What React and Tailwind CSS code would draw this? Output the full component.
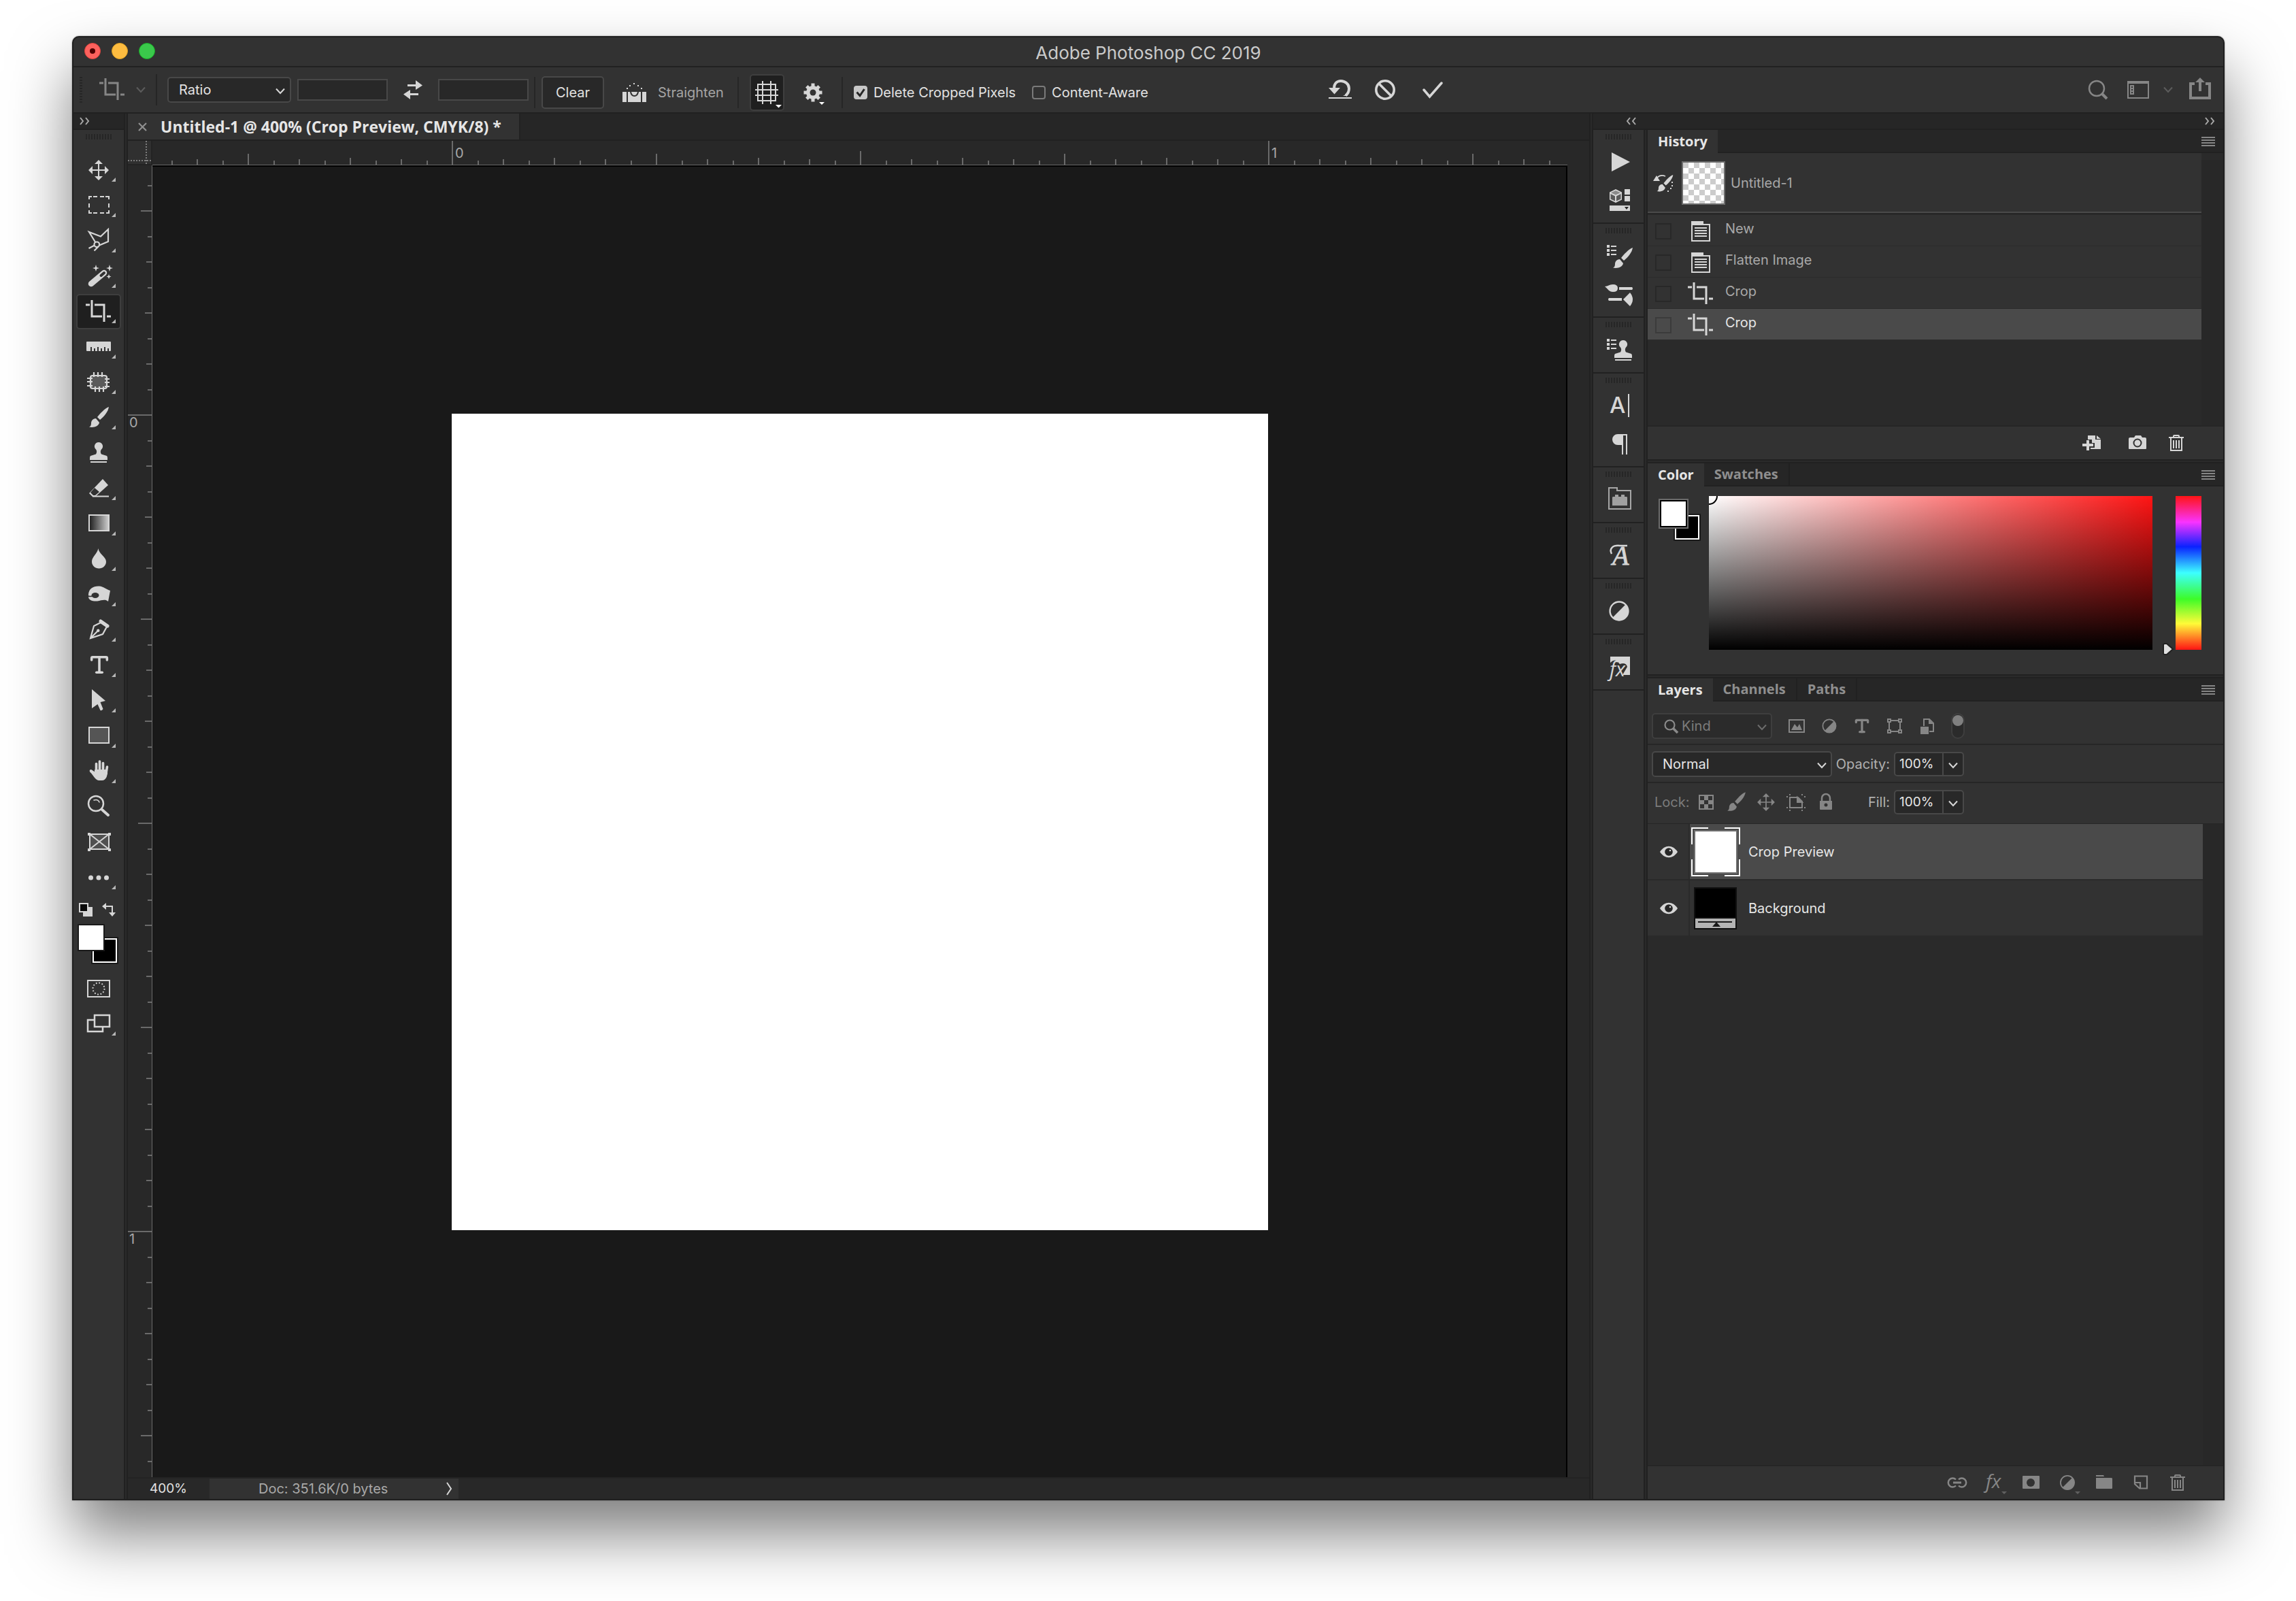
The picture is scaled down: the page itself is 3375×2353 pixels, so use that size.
import React, { useState } from 'react';
import { Type } from 'lucide-react';

const LIGHT = '#d6d6d6';
const MUTED = '#868686';

const ChevronDown = ({ className = '', color = LIGHT }) => (
    <svg className={className} width="16" height="10" viewBox="0 0 16 10" fill="none" stroke={color} strokeWidth="2">
        <path d="M2 1.5 8 8l6-6.5" />
    </svg>
)

const DoubleChevron = ({ left }) => (
    <svg width="16" height="12" viewBox="0 0 16 12" fill="none" stroke="#a8a8a8" strokeWidth="2">
        {left ? <path d="M6 1 2 6l4 5M14 1l-4 5 4 5" /> : <path d="M2 1l4 5-4 5M10 1l4 5-4 5" />}
    </svg>
)

const Gutter = () => (
    <div className="w-[6px] shrink-0 border-x-2 border-[#212121] bg-[#2a2a2a]"></div>
)

const Grip = () => (
    <div className="mx-auto mt-[6px] h-2 w-[38px] bg-[repeating-linear-gradient(90deg,#262626_0_2px,transparent_2px_4px)]"></div>
)

const Separator = ({ className = '' }) => (
    <div className={'h-[46px] w-[2px] bg-[#262626] ' + className}></div>
)

const CropShape = ({ color = LIGHT }) => (
    <g fill="none" stroke={color} strokeWidth="3">
        <path d="M-10 -17V7H5M-6 -10H8V15M-19 -10h6M12 7h6" />
    </g>
)

const BrushShape = ({ color = LIGHT }) => (
    <g fill={color}>
        <path d="M15-16C9-14 2-6-2-1l4 4C8-2 14-9 15-16z" />
        <path d="M-4 1C-9 1-11 5-11 8s-1 5-3 5.500C-8 15 0 13 1 7z" />
    </g>
)

const MoveShape = ({ color = LIGHT }) => (
    <g fill={color}>
        <path d="M-1-12h2v24h-2zM-12-1h24v2h-24z" />
        <path d="M0-15l6 6h-12zM0 15l6-6h-12zM-15 0l6-6v12zM15 0l-6-6v12z" />
    </g>
)

const StampShape = ({ color = LIGHT }) => (
    <g fill={color}>
        <path d="M0-16a6 6 0 0 1 4 10.500C2-3 3 0 4 1.500L12 4q1 1 1 3v3h-26V7q0-2 1-3l8-2.500C-3 0-2-3-4-5.500A6 6 0 0 1 0-16z" />
        <path d="M-12 12h24v2h-24z" />
    </g>
)

const AdjustShape = ({ color = LIGHT, r = 13 }) => (
    <g transform={'scale(' + r / 13 + ')'}>
        <circle r="12.500" fill="none" stroke={color} strokeWidth="2.200" />
        <path d="M9-9A12.700 12.700 0 1 1-9 9z" fill={color} />
    </g>
)

const TrashShape = ({ color = LIGHT }) => (
    <g fill="none" stroke={color} strokeWidth="2">
        <path d="M-11-8h22M-8-8v19H8V-8M-4-8v-2q0-1 1-1h6q1 0 1 1v2M-4-4V8M0-4V8M4-4V8" />
    </g>
)

const ListShape = () => (
    <g fill={LIGHT}>
        <path d="M-17-16h4v4h-4zM-17-10h4v4h-4zM-17-4h4v4h-4zM-11-15h8v2h-8zM-11-9h8v2h-8zM-11-3h8v2h-8z" />
    </g>
)

const tools = [
    {
        name: 'Move', icon: <MoveShape />
    },
    {
        name: 'Marquee', icon: <path d="M-14-9v-4h4M-8-13h6M2-13h6M10-13h5v4M15-3v6M15 7v4h-4M8 11H2M-2 11h-6M-10 11h-4V7M-14 3v-6" fill="none" stroke={LIGHT} strokeWidth="2" />
    },
    {
        name: 'Lasso',
        icon: <g fill="none" stroke={LIGHT} strokeWidth="2.200">
            <path d="M-4.500 2.500-14-13 3-6.500 14-17V1L1 6.500" />
            <circle cx="-2.700" cy="5.300" r="3.800" />
            <path d="M-6 6.500-14.500 11M-.5 8.500-6.500 14.500" />
        </g>
    },
    {
        name: 'Magic Wand',
        icon: <g>
            <path d="M-11 11 8-5" stroke={LIGHT} strokeWidth="8.500" strokeLinecap="round" />
            <path d="M3.500-1 8-5" stroke="#323232" strokeWidth="4" strokeLinecap="round" />
            <path d="M-4-17l1.200 4 3.800 1-3.800 1.200L-4-7l-1.200-3.800L-9-12l3.800-1zM16-17l1.200 4 3.800 1-3.800 1.200L16-7l-1.200-3.800L11-12l3.800-1zM15-3l1 2.500 2.500 1-2.500 1L15 4l-1-2.500-2.500-1 2.500-1z" fill={LIGHT} />
        </g>
    },
    {
        name: 'Crop', icon: <CropShape />, active: true
    },
    {
        name: 'Ruler', icon: <path d="M-18-7q0-1 1-1h34q1 0 1 1V5q0 1-1 1h-2V2h-2v4h-3V0H8v6H5V2H3v4H0V0h-2v6h-3V2h-2v4h-3V0h-2v6h-5q-1 0-1-1z" fill={LIGHT} />
    },
    {
        name: 'Patch',
        icon: <g stroke={LIGHT} strokeWidth="2.200">
            <rect x="-12" y="-10" width="24" height="19" rx="3" fill="#5a5a5a" />
            <path d="M-7-15v7M-1-15v7M5-15v7M-5 6v8M1 6v8M7 6v8M-17-6h8M-17-1h8M-17 5h8M9-5h7M9 0h7M9 6h7" />
        </g>
    },
    {
        name: 'Brush', icon: <BrushShape />
    },
    {
        name: 'Stamp', icon: <StampShape />, single: true
    },
    {
        name: 'Eraser',
        icon: <g>
            <path d="M6-14 14-5-5 12h-4l-5-5z" fill={LIGHT} />
            <path d="M-6-1 1 5l-6 5h-3l-4-4z" fill="#323232" />
            <path d="M-9 11.500h24" stroke={LIGHT} strokeWidth="2" />
        </g>
    },
    {
        name: 'Gradient',
        icon: <g>
            <linearGradient id="tool-gradient"><stop offset="0" stopColor="#1c1c1c" /><stop offset="1" stopColor="#d0d0d0" /></linearGradient>
            <rect x="-14" y="-13" width="29" height="23" fill="url(#tool-gradient)" stroke={LIGHT} strokeWidth="2" />
        </g>
    },
    {
        name: 'Blur', icon: <path d="M-.5-16C0-8 11-4 11 3.500 11 9.500 6 13.500.5 13.500S-10 9.500-10 3.500C-10-4-2-8-.5-16z" fill={LIGHT} />
    },
    {
        name: 'Dodge',
        icon: <g>
            <path d="M-15-1C-14-9-8-13 1-12.500 7-12 11-8 17-6L14 10C10 6 5 8-2 9.500-9 10-15 8-15 3z" fill={LIGHT} />
            <ellipse cx="-5" cy="1" rx="5.500" ry="4" fill="#323232" />
            <path d="M-9 2q-3 1-7 0" fill="none" stroke="#323232" strokeWidth="1.500" />
        </g>
    },
    {
        name: 'Pen',
        icon: <g fill="none" stroke={LIGHT} strokeWidth="2.200">
            <path d="M-12 12-7-6 3-11 12-5 6 6zM-12 12-1 1" />
            <circle cx="-.7" cy=".7" r="2.200" fill={LIGHT} stroke="none" />
            <path d="M3-13 13-6" strokeWidth="5" strokeLinecap="round" />
        </g>
    },
    {
        name: 'Type', icon: <Type x="-16" y="-18" width="34" height="34" color={LIGHT} strokeWidth={2.5} />
    },
    {
        name: 'Path Selection', icon: <path d="M-10-17 10 0 2.500 2 6.500 12q-2 3-4 2L-1.500 5-10 11z" fill={LIGHT} />
    },
    {
        name: 'Rectangle', icon: <rect x="-14" y="-13" width="29" height="23" fill="#555" stroke={LIGHT} strokeWidth="2" />
    },
    {
        name: 'Hand',
        icon: <g stroke={LIGHT} strokeLinecap="round" strokeWidth="3.600">
            <path d="M-3.500 0v-11.500M1.500-1v-14M6.500 0v-12.500M11 2l1.500-9" />
            <path d="M-5-2h17C13 5 10 12 5 12H0C-5 12-7 4-12 0q-1-2 1-2l6 4z" fill={LIGHT} strokeWidth="2" strokeLinejoin="round" />
        </g>
    },
    {
        name: 'Zoom', single: true,
        icon: <g fill="none" stroke={LIGHT} strokeLinecap="round">
            <circle cx="-4" cy="-5" r="11" strokeWidth="2.500" />
            <path d="M-7-10q6-2 8 3" strokeWidth="1.500" />
            <path d="M5 4l9 8" strokeWidth="4" />
        </g>
    },
    {
        name: 'Frame', single: true,
        icon: <g>
            <path d="M-13-12h28v22h-28z" fill="#505050" />
            <path d="M-13-12h28v22h-28zM-13-12 15 10M15-12-13 10" fill="none" stroke={LIGHT} strokeWidth="2" />
            <path d="M-16-14h4v4h-4zM14-14h4v4h-4zM-16 9h4v4h-4zM14 9h4v4h-4z" fill={LIGHT} />
        </g>
    },
    {
        name: 'More', icon: <g fill={LIGHT}><circle cx="-11.500" r="3.500" /><circle r="3.500" /><circle cx="11.500" r="3.500" /></g>
    },
]

const ToolButton = ({ name, icon, active, single }) => (
    <button
        type="button"
        aria-label={name}
        className={'block h-[52px] w-[66px] shrink-0 rounded-[5px] border-2 ' + (active ? 'border-[#3e3e3e] bg-[#1f1f1f]' : 'border-transparent')}
    >
        <svg width="62" height="48" viewBox="-31 -24 62 48">
            {icon}
            {!single && <path d="M19 17h6v-6z" fill="#b8b8b8" />}
        </svg>
    </button>
)

const Toolbar = () => (
    <div className="flex w-[74px] shrink-0 flex-col bg-[#323232]">
        <div className="h-6 border-b-2 border-[#212121] bg-[#262626] px-2 pt-[5px]"><DoubleChevron /></div>
        <Grip />
        <div className="mt-[19px] flex flex-col items-center">
            {tools.map((tool) => <ToolButton key={tool.name} {...tool} />)}
        </div>
        <div className="flex h-[42px] items-center justify-between pr-3 pl-2">
            <button type="button" aria-label="Default colors">
                <svg width="20" height="20" viewBox="0 0 20 20">
                    <path d="M6 6h14v14H6z" fill={LIGHT} />
                    <path d="M1 1h12v12H1z" fill="#0a0a0a" stroke={LIGHT} strokeWidth="2" />
                </svg>
            </button>
            <button type="button" aria-label="Swap colors">
                <svg width="20" height="20" viewBox="0 0 20 20">
                    <path d="M5 5h10v9" fill="none" stroke={LIGHT} strokeWidth="2" />
                    <path d="M0 5l6-5v10zM10 14h10l-5 6z" fill={LIGHT} />
                </svg>
            </button>
        </div>
        <div className="relative mb-[10px] h-[59px] shrink-0">
            <div className="absolute top-[19px] left-[26px] h-10 w-10 border-2 border-[#1a1a1a] bg-white p-[2px]"><div className="h-full bg-black"></div></div>
            <div className="absolute top-0 left-[6px] h-10 w-10 border-2 border-[#1a1a1a] bg-white"></div>
        </div>
        <div className="flex flex-col items-center">
            <ToolButton
                name="Quick Mask"
                single
                icon={<g fill="none" stroke={LIGHT} strokeWidth="2"><path d="M-16-12h32v24h-32z" /><circle r="8.500" strokeDasharray="1.800 2.650" /></g>}
            />
            <ToolButton
                name="Screen Mode"
                icon={<g fill="none" stroke={LIGHT} strokeWidth="2.500"><path d="M-6-6h-10v17H6V5" /><path d="M-6-13h22V4h-22z" /></g>}
            />
        </div>
    </div>
)

const OptionsBar = () => {
    const [ratio, setRatio] = useState('Ratio');
    const [deletePixels, setDeletePixels] = useState(true);
    const [aware, setAware] = useState(false);

    return (
        <div className="flex h-[68px] shrink-0 border-b-2 border-[#212121] bg-[#323232] text-[20px] text-[#e2e2e2]">
            <div className="flex items-center">
                <div className="ml-[9px] h-[38px] w-1 bg-[repeating-linear-gradient(#262626_0_2px,transparent_2px_4px)]"></div>
                <svg className="ml-6" width="40" height="36" viewBox="-20 -18 40 36"><CropShape color={MUTED} /></svg>
                <ChevronDown className="ml-[14px]" color="#5c5c5c" />
                <Separator className="ml-[14px]" />
                <div className="relative ml-[15px]">
                    <select
                        aria-label="Crop preset"
                        value={ratio}
                        onChange={(e) => setRatio(e.target.value)}
                        className="block h-[38px] w-[182px] appearance-none rounded-[5px] border-2 border-[#484848] bg-[#282828] pl-[15px]"
                    >
                        <option>Ratio</option>
                    </select>
                    <ChevronDown className="pointer-events-none absolute top-4 right-2" />
                </div>
                <input aria-label="Width" className="ml-[9px] h-8 w-[133px] border-2 border-[#484848] bg-[#282828] px-2" />
                <button type="button" aria-label="Swap" className="mx-[23px]">
                    <svg width="28" height="28" viewBox="0 0 28 28" fill={LIGHT}>
                        <path d="M6 6h12V0l10 7.500L18 14V9H6zM22 19H10v-5L0 20.500 10 28v-6h12z" />
                    </svg>
                </button>
                <input aria-label="Height" className="h-8 w-[133px] border-2 border-[#484848] bg-[#282828] px-2" />
            </div>
            <div className="flex items-center pt-2">
                <Separator className="ml-2" />
                <button type="button" className="ml-[9px] h-12 w-[92px] rounded-[5px] border-2 border-[#484848] bg-[#282828]">Clear</button>
                <button type="button" className="ml-[27px] flex items-center gap-[17px] text-[#a4a4a4]">
                    <svg width="35" height="28" viewBox="0 0 35 28" fill={LIGHT}>
                        <path d="M0 13h6v15H0zM8 13h3q1 7 6.500 7T24 13h3v15H8zM29 13h6v15h-6zM13 13h9q-1 5-4.500 5T13 13z" />
                        <path d="M6 7h2v2H6zM10 3h2v2h-2zM16 0h2v2h-2zM22 3h2v2h-2zM27 7h2v2h-2z" />
                    </svg>
                    Straighten
                </button>
                <Separator className="ml-5" />
                <button type="button" aria-label="Overlay" className="ml-4 h-[54px] w-[51px] rounded-[5px] border-2 border-[#3e3e3e] bg-[#1f1f1f]">
                    <svg width="47" height="50" viewBox="0 0 47 50">
                        <path d="M17 8v34M29 8v34M6 21h34M6 29h34M10 13h26v24H10z" fill="none" stroke={LIGHT} strokeWidth="2" />
                        <path d="M36 43h9l-4.500 4.500z" fill="#fff" />
                    </svg>
                </button>
                <button type="button" aria-label="Settings" className="ml-7">
                    <svg width="32" height="36" viewBox="-14 -18 32 36">
                        <path d="M-2.500-13.500h5V13.500h-5zM-13.500-2.500h27v5h-27z" fill={LIGHT} />
                        <path d="M-2.500-13h5v26h-5zM-13-2.500h26v5h-26z" fill={LIGHT} transform="rotate(45)" />
                        <circle r="7.500" fill="none" stroke={LIGHT} strokeWidth="5" />
                        <circle r="4.500" fill="#323232" />
                        <path d="M9 14h8l-4 4z" fill="#fff" />
                    </svg>
                </button>
                <Separator className="ml-6" />
                <label className="ml-4 flex items-center gap-[9px]">
                    <span className="relative">
                        <input type="checkbox" checked={deletePixels} onChange={(e) => setDeletePixels(e.target.checked)} className="peer block h-5 w-5 appearance-none rounded-[4px] border-2 border-[#7a7a7a] checked:border-[#c8c8c8] checked:bg-[#c8c8c8]" />
                        <svg className="pointer-events-none absolute top-0 left-0 hidden peer-checked:block" width="20" height="20" viewBox="0 0 20 20"><path d="M4.500 9.500 9 14.500 15.500 5" fill="none" stroke="#262626" strokeWidth="3" /></svg>
                    </span>
                    Delete Cropped Pixels
                </label>
                <label className="ml-6 flex items-center gap-[9px]">
                    <input type="checkbox" checked={aware} onChange={(e) => setAware(e.target.checked)} className="block h-5 w-5 appearance-none rounded-[4px] border-2 border-[#7a7a7a] checked:bg-[#c8c8c8]" />
                    Content-Aware
                </label>
            </div>
            <div className="ml-[265px] flex items-center gap-[34px]">
                <button type="button" aria-label="Reset">
                    <svg width="34" height="30" viewBox="0 0 34 30">
                        <path d="M8 13C8 6 12 2 18 2s12 4.500 12 11c0 4-2 8-5 10.500" fill="none" stroke={LIGHT} strokeWidth="4" />
                        <path d="M0 12h17l-8.500 9.500zM0 26h34v2H0zM21 24l6-3 1 3z" fill={LIGHT} />
                    </svg>
                </button>
                <button type="button" aria-label="Cancel">
                    <svg width="30" height="30" viewBox="-15 -15 30 30" fill="none" stroke={LIGHT} strokeWidth="3.600">
                        <circle r="13.200" /><path d="M-9-9 9 9" />
                    </svg>
                </button>
                <button type="button" aria-label="Commit" className="ml-[6px]">
                    <svg width="30" height="26" viewBox="0 0 30 26" fill="none" stroke={LIGHT} strokeWidth="3.500" strokeLinecap="round">
                        <path d="M2 13l8.500 10L28 3" />
                    </svg>
                </button>
            </div>
            <div className="mr-[18px] ml-auto flex items-center">
                <button type="button" aria-label="Search">
                    <svg width="30" height="30" viewBox="0 0 30 30" fill="none" stroke={MUTED} strokeWidth="3">
                        <circle cx="13" cy="13" r="11" strokeWidth="2.500" /><path d="M20 20l8 8" strokeWidth="4" />
                    </svg>
                </button>
                <button type="button" aria-label="Workspace" className="ml-7">
                    <svg width="32" height="26" viewBox="0 0 32 26">
                        <path d="M0 0h32v26H0zM2 4v20h28V4z" fill={MUTED} fillRule="evenodd" />
                        <path d="M4 6h6v14H4zM6 8v2h2V8zM6 12v2h2v-2zM6 16v2h2v-2z" fill={MUTED} fillRule="evenodd" />
                    </svg>
                </button>
                <ChevronDown className="ml-5" color="#5c5c5c" />
                <button type="button" aria-label="Share" className="ml-[23px] -mt-1">
                    <svg width="32" height="32" viewBox="0 0 32 32">
                        <path d="M8 9H2v21h28V9h-6" fill="none" stroke={MUTED} strokeWidth="4" />
                        <path d="M16 0l7 7h-5v13h-4V7H9z" fill={MUTED} />
                    </svg>
                </button>
            </div>
        </div>
    );
}

// the zero mark lies 600px before the centre of the ruler, one unit is 1200px
const ticks = Array.from({ length: 81 }, (_, n) => n - 24).map((n) => {
    let size = 6;
    if (n % 32 === 0) size = 35;
    else if (n % 16 === 0) size = 20;
    else if (n % 8 === 0) size = 16;
    else if (n % 4 === 0) size = 10;
    else if (n % 2 === 0) size = 8;
    return { n, size, at: Math.round(n * 37.5) - 600 };
})

const RulerTop = () => (
    <svg className="block h-[35px] w-full" aria-hidden="true">
        <svg x="50%" overflow="visible">
            {ticks.map((t) => <rect key={t.n} x={t.at} y={35 - t.size} width="2" height={t.size} fill="#6a6a6a" />)}
            <text x="-595" y="25" fontSize="20" fill="#a8a8a8">0</text>
            <text x="605" y="25" fontSize="20" fill="#a8a8a8">1</text>
        </svg>
    </svg>
)

const RulerLeft = () => (
    <svg className="block h-full w-[35px]" aria-hidden="true">
        <svg y="50%" overflow="visible">
            {ticks.map((t) => <rect key={t.n} x={35 - t.size} y={t.at + 2} width={t.size} height="2" fill="#6a6a6a" />)}
            <text x="2" y="-579" fontSize="20" fill="#a8a8a8">0</text>
            <text x="2" y="621" fontSize="20" fill="#a8a8a8">1</text>
        </svg>
    </svg>
)

const DocumentArea = () => (
    <div className="flex min-w-0 flex-1 flex-col bg-[#282828]">
        <div className="flex h-10 shrink-0 border-b-2 border-[#212121] bg-[#262626]">
            <div className="flex items-center border-r-2 border-[#222] bg-[#323232] pr-[26px] pl-[15px] font-['Open_Sans',sans-serif] text-[23px] leading-none font-bold text-[#e6e6e6]">
                <button type="button" aria-label="Close" className="mr-5">
                    <svg width="13" height="13" viewBox="0 0 13 13" stroke="#909090" strokeWidth="2.200"><path d="M1 1l11 11M12 1 1 12" /></svg>
                </button>
                Untitled-1 @ 400% (Crop Preview, CMYK/8) *
            </div>
        </div>
        <div className="flex min-h-0 flex-1">
            <div className="flex w-9 shrink-0 flex-col">
                <div className="h-9 shrink-0 border-r-2 border-b-2 border-[#232323] bg-[#303030]">
                    <svg width="34" height="34" viewBox="0 0 34 34" stroke="#7c7c7c" strokeWidth="2" strokeDasharray="2 2">
                        <path d="M27 0v34M0 29h34" />
                    </svg>
                </div>
                <div className="min-h-0 flex-1 border-r border-[#6a6a6a]"><RulerLeft /></div>
            </div>
            <div className="flex min-w-0 flex-1 flex-col">
                <div className="h-9 shrink-0 border-b border-[#6a6a6a]"><RulerTop /></div>
                <div className="flex min-h-0 flex-1 items-center justify-center overflow-hidden bg-[#191919] pt-[2px] shadow-[inset_-2px_2px_0_#000]">
                    <div className="h-[1200px] w-[1200px] shrink-0 bg-white"></div>
                </div>
            </div>
            <div className="w-8 shrink-0"></div>
        </div>
        <div className="flex h-8 shrink-0 items-center border-t-2 border-[#232323] text-[20px]">
            <div className="w-[120px] pl-8 text-[19px] text-[#e2e2e2]">400%</div>
            <button type="button" className="flex h-full w-[366px] items-center justify-between bg-[#323232] pr-[9px] pl-[72px] text-[#a8a8a8]">
                Doc: 351.6K/0 bytes
                <svg width="9" height="20" viewBox="0 0 9 20" fill="none" stroke="#d6d6d6" strokeWidth="2"><path d="M1 1l6 9-6 9" /></svg>
            </button>
        </div>
    </div>
)

const dockGroups = [
    [
        {
            name: 'Actions', icon: <path d="M-10-14 17 0-10 14z" fill={LIGHT} />
        },
        {
            name: 'Libraries',
            icon: <g>
                <path d="M-4-16 5-11.500v11L-4 4l-9-4.500v-11z" fill={LIGHT} />
                <path d="M-4-14 3-10.800-4-7.500-11-10.800z" fill="#8a8a8a" />
                <path d="M-11.500-9-5-5.800v7.200l-6.500-3zM3.500-9-3-5.800v7.200l6.500-3z" fill="#5a5a5a" />
                <path d="M9-16h8v8H9zM9-6h8v8H9zM-13 8h30v8h-30z" fill={LIGHT} />
                <path d="M9 10h6l-3 4z" fill="#262626" />
            </g>
        },
    ],
    [
        {
            name: 'Brushes', icon: <g><ListShape /><g transform="translate(6 4)"><BrushShape /></g></g>
        },
        {
            name: 'Brush Settings',
            icon: <g fill={LIGHT}>
                <path d="M-20-11C-15-11-14-14-8-14q7 0 7 5.500T-8-3C-14-3-16-8-20-11zM1-10h19q2 2 0 4H1zM5 6v4h-19q-2-2 0-4zM7 8 17-2q4 5 4 10t-4 10z" />
            </g>
        },
    ],
    [
        {
            name: 'Clone Source', icon: <g><ListShape /><g transform="translate(7 2)"><StampShape /></g></g>
        },
    ],
    [
        {
            name: 'Character',
            icon: <g fill={LIGHT}>
                <text x="-13" y="11" fontSize="33" fontWeight="500">A</text>
                <path d="M14-17h2v34h-2z" />
            </g>
        },
        {
            name: 'Paragraph', icon: <path d="M13-14v30h-2v-28H7v28H5V2H-1a8 8 0 0 1 0-16z" fill={LIGHT} />
        },
    ],
    [
        {
            name: 'Learn',
            icon: <g>
                <path d="M-14-17H-2v4h20v27h-32z" fill="none" stroke="#a6a6a6" strokeWidth="2" />
                <path d="M-9-3q0-1 2-1h2v-3h5v3h4v-3h5v3h2q2 0 2 1v12H-9z" fill="#a0a0a0" />
            </g>
        },
    ],
    [
        {
            name: 'Glyphs',
            icon: <g fill={LIGHT}>
                <text x="-9" y="14" fontSize="40" fontStyle="italic" fontFamily="'Liberation Serif', serif" stroke={LIGHT} strokeWidth=".8">A</text>
                <path d="M-10-2C-14-10-8-15 2-14h11" fill="none" stroke={LIGHT} strokeWidth="2.500" />
            </g>
        },
    ],
    [
        {
            name: 'Adjustments', icon: <g transform="translate(1 0)"><AdjustShape r={14} /></g>
        },
    ],
    [
        {
            name: 'Styles',
            icon: <g>
                <path d="M-12-15h29v27H-12z" fill={LIGHT} />
                <path d="M-12-6q7-8 14 2 9-3 11 4L6 12h-18z" fill="#323232" />
                <text x="-13" y="14" fontSize="29" fontStyle="italic" fontFamily="'Open Sans', sans-serif" fill={LIGHT}>fx</text>
            </g>
        },
    ],
]

const Dock = () => (
    <div className="flex w-[74px] shrink-0 flex-col bg-[#323232]">
        {dockGroups.map((group, index) => (
            <div key={index} className="flex flex-col items-center border-b-2 border-[#212121] pb-[5px]">
                <Grip />
                <div className="mt-[5px]">
                    {group.map((item) => (
                        <button key={item.name} type="button" aria-label={item.name} className="block">
                            <svg className="overflow-visible" width="56" height="56" viewBox="-28 -28 56 56">{item.icon}</svg>
                        </button>
                    ))}
                </div>
            </div>
        ))}
    </div>
)

const PanelTabs = ({ tabs }) => (
    <div className="flex h-[34px] shrink-0 bg-[#262626] font-['Open_Sans',sans-serif] text-[20px] leading-none font-bold">
        {tabs.map((tab, index) => (
            <button
                key={tab}
                type="button"
                className={'h-full ' + (index === 0 ? 'bg-[#323232] px-[15px] text-[#e6e6e6]' : 'border-r-2 border-b-2 border-[#212121] px-[15px] text-[#8f8f8f]')}
            >
                {tab}
            </button>
        ))}
        <div className="flex-1 border-b-2 border-[#212121]"></div>
        <button type="button" aria-label="Panel menu" className="border-b-2 border-[#212121] pr-3">
            <div className="mt-[2px] h-[14px] w-5 bg-[repeating-linear-gradient(#868686_0_2px,transparent_2px_4px)]"></div>
        </button>
    </div>
)

const PanelGap = () => (
    <div className="h-[6px] shrink-0 border-y-2 border-[#212121] bg-[#2a2a2a]"></div>
)

const PageIcon = () => (
    <g>
        <path d="M-14-15h18v5h-18z" fill={LIGHT} />
        <path d="M-13-10h26v24h-26zM-9-5H9M-9-1H9M-9 3H9M-9 7H9" fill="none" stroke={LIGHT} strokeWidth="2" />
    </g>
)

const historyRows = [
    {
        name: 'New', icon: <PageIcon />
    },
    {
        name: 'Flatten Image', icon: <PageIcon />
    },
    {
        name: 'Crop', icon: <CropShape />
    },
    {
        name: 'Crop', icon: <CropShape />, active: true
    },
]

const HistoryPanel = () => (
    <div className="flex h-[484px] shrink-0 flex-col bg-[#323232]">
        <PanelTabs tabs={['History']} />
        <div className="flex min-h-0 flex-1 bg-[#2a2a2a]">
            <div className="flex-1">
                <div className="flex h-[90px] items-center border-b-2 border-[#262626] bg-[#323232] shadow-[inset_0_-2px_0_#4a4a4a]">
                    <svg className="ml-2" width="30" height="30" viewBox="0 0 30 30">
                        <g transform="translate(17 16) scale(.82)"><BrushShape /></g>
                        <path d="M0 12 5 4l5 8z" fill={LIGHT} />
                        <path d="M6 7q5-5 12-2" fill="none" stroke={LIGHT} strokeWidth="1.500" />
                        <path d="M27 13h2v2h-2zM27 18h2v2h-2zM25 22h2v2h-2zM21 26h2v2h-2z" fill={LIGHT} />
                    </svg>
                    <div className="ml-3 h-16 w-16 border-2 border-[#6c6c6c] bg-[conic-gradient(#fff_25%,#ccc_0_50%,#fff_0_75%,#ccc_0)] bg-[length:16px_16px]"></div>
                    <span className="ml-2 text-[20px] text-[#a8a8a8]">Untitled-1</span>
                </div>
                <ul className="border-t border-[#2b2b2b]">
                    {historyRows.map((row, index) => (
                        <li key={index} className={'flex h-[46px] items-center border-b border-[#2b2b2b] text-[20px] ' + (row.active ? 'bg-[#4a4a4a] text-[#e6e6e6]' : 'bg-[#323232] text-[#a8a8a8]')}>
                            <input type="checkbox" aria-label={'Source ' + (index + 1)} className="mt-[2px] ml-[11px] h-6 w-6 appearance-none border-2 border-black/20" />
                            <svg className="mt-[2px] ml-[23px]" width="40" height="36" viewBox="-20 -18 40 36">{row.icon}</svg>
                            <span className="ml-4 pb-[6px]">{row.name}</span>
                        </li>
                    ))}
                </ul>
            </div>
            <div className="mt-[10px] w-8 bg-[#282828]"></div>
        </div>
        <div className="flex h-[50px] shrink-0 items-center justify-end border-t-2 border-[#262626] pr-[57px]">
            <button type="button" aria-label="New document from state" className="mr-10">
                <svg width="28" height="24" viewBox="0 0 28 24" fill={LIGHT}>
                    <path d="M8 1h11v6h8v14H12v-2h6v-7h-4V7H8zM21 1l6 5h-6zM6 8h4v5h6v4h-6v6H6v-6H0v-4h6z" />
                </svg>
            </button>
            <button type="button" aria-label="New snapshot" className="mr-8">
                <svg width="26" height="22" viewBox="0 0 26 22">
                    <path d="M2 3h6l2-3h8l2 3h4q2 0 2 2v14q0 1-1 1H1q-1 0-1-1V5q0-2 2-2z" fill={LIGHT} />
                    <circle cx="13" cy="11" r="5.500" fill="none" stroke="#323232" strokeWidth="2" />
                </svg>
            </button>
            <button type="button" aria-label="Delete state">
                <svg width="24" height="26" viewBox="-12 -13 24 26"><TrashShape /></svg>
            </button>
        </div>
    </div>
)

const ColorPanel = () => {
    const [hue, setHue] = useState(0);

    return (
        <div className="flex shrink-0 flex-col bg-[#323232]">
            <PanelTabs tabs={['Color', 'Swatches']} />
            <div className="flex h-[276px] px-4 pt-[14px] pr-8">
                <div className="relative w-[74px] shrink-0">
                    <div className="absolute top-[26px] left-[22px] h-10 w-10 border-2 border-[#1a1a1a] bg-white p-[2px]"><div className="h-full bg-black"></div></div>
                    <div className="absolute top-1 left-0 h-11 w-11 border-2 border-[#6c6c6c] bg-black p-[2px]"><div className="h-full bg-white"></div></div>
                </div>
                <div className="h-[226px] flex-1 overflow-hidden bg-[linear-gradient(transparent,#000),linear-gradient(90deg,#fff,#ff1414)]">
                    <svg width="16" height="16"><circle r="12" fill="none" stroke="#000" strokeWidth="2" /></svg>
                </div>
                <div className="relative ml-[34px] h-[226px] w-[38px] bg-[linear-gradient(#ff1414,#f933ff_17%,#0a22ff_33%,#3dffff_50%,#3dfc28_67%,#fffb38_83%,#ff1414)]">
                    <input type="range" aria-label="Hue" min="0" max="360" value={hue} onChange={(e) => setHue(e.target.value)} className="absolute inset-0 h-full w-full opacity-0" />
                    <svg className="absolute -bottom-[9px] -left-5" width="18" height="20" viewBox="0 0 18 20"><path d="M2 4q0-2 2-2h3l9 8-9 8H4q-2 0-2-2z" fill="#e0e0e0" stroke="#222" strokeWidth="2" /></svg>
                </div>
            </div>
        </div>
    );
}

const filterIcons = [
    {
        name: 'Filter pixel layers',
        icon: <g><path d="M-11-9h22V9h-22z" fill="none" stroke={MUTED} strokeWidth="2" /><path d="M-8 6l5-9 4 5 3-5 4 9z" fill={MUTED} /></g>
    },
    {
        name: 'Filter adjustment layers', icon: <AdjustShape color={MUTED} r={10} />
    },
    {
        name: 'Filter type layers', icon: <Type x="-13" y="-13" width="26" height="26" color={MUTED} strokeWidth={3} />
    },
    {
        name: 'Filter shape layers',
        icon: <g fill="none" stroke={MUTED} strokeWidth="2"><path d="M-5-8H5M-5 8H5M-8-5V5M8-5V5" /><path d="M-10-10h4v4h-4zM6-10h4v4H6zM-10 6h4v4h-4zM6 6h4v4H6z" /></g>
    },
    {
        name: 'Filter smart objects',
        icon: <g><path d="M-5 0v-10H3l6 6V8H3" fill="none" stroke={MUTED} strokeWidth="2" /><path d="M2-10v7h7zM-10 1H2v11h-12z" fill={MUTED} /></g>
    },
]

const lockIcons = [
    {
        name: 'Lock transparency', icon: <path d="M-11-11h22v22h-22zM-9-9v6h6v-6zM3-9v6h6v-6zM-3-3v6h6v-6zM-9 3v6h6V3zM3 3v6h6V3z" fill={MUTED} fillRule="evenodd" />
    },
    {
        name: 'Lock pixels', icon: <g transform="scale(.92)"><BrushShape color={MUTED} /></g>
    },
    {
        name: 'Lock position', icon: <g transform="scale(.86)"><MoveShape color={MUTED} /></g>
    },
    {
        name: 'Lock artboard',
        icon: <g fill="none" stroke={MUTED} strokeWidth="2"><path d="M-9-7H3l6 6v9H-9z" /><path d="M2-7v7h7z" fill={MUTED} /><path d="M-14-8h2M-14 8h2M12-8h2M12 8h2M-9-12v2M9-12v2M-9 11v2M9 11v2" /></g>
    },
    {
        name: 'Lock all',
        icon: <g><path d="M-9-2h18v12q0 1-1 1H-8q-1 0-1-1z" fill={MUTED} /><path d="M-6-2v-4a6 6 0 0 1 12 0v4" fill="none" stroke={MUTED} strokeWidth="2.500" /><circle cy="4" r="2.500" fill="#323232" /></g>
    },
]

const Percent = ({ id, label, className }) => {
    const [value, setValue] = useState('100%');

    return (
        <>
            <label htmlFor={id} className={'pr-[6px] text-right text-[#b0b0b0] ' + className}>{label}</label>
            <div className="flex h-9 rounded-[5px] border-2 border-[#484848] bg-[#282828]">
                <input id={id} value={value} onChange={(e) => setValue(e.target.value)} className="w-[71px] border-r-2 border-[#484848] pl-[6px] text-[19px] text-[#e6e6e6]" />
                <button type="button" aria-label={label + ' slider'} className="flex w-7 items-center justify-center pt-1"><ChevronDown /></button>
            </div>
        </>
    );
}

const Eye = () => (
    <svg width="26" height="18" viewBox="-13 -9 26 18">
        <path d="M-13 0C-6-11 6-11 13 0 6 11-6 11-13 0z" fill={LIGHT} />
        <circle r="5.800" fill="#262626" />
        <circle cx="2" cy="-2" r="1.300" fill={LIGHT} />
    </svg>
)

const layers = [
    {
        name: 'Crop Preview', active: true,
        thumb: <svg width="76" height="74" viewBox="-38 -37 76 74">
            <path d="M-32-32h64v64h-64z" fill="#6e6e6e" />
            <path d="M-30-30h60v60h-60z" fill="#fff" />
            <path d="M-35-11v-24h24M13-35h22v24M35 11v24H13M-11 35h-24V11" fill="none" stroke="#fff" strokeWidth="2" />
        </svg>
    },
    {
        name: 'Background',
        thumb: <svg width="76" height="74" viewBox="-38 -37 76 74">
            <path d="M-32-31h63v62h-63z" fill="#101010" />
            <path d="M-30-29h59v42h-59z" fill="#000" />
            <path d="M-30 15h59v14h-59z" fill="#b4b4b4" />
            <path d="M-26 19h50v2h-50zM-5 27 1 20l6 7z" fill="#1a1a1a" />
        </svg>
    },
]

const footerIcons = [
    {
        name: 'Link layers',
        icon: <g fill="none" stroke={MUTED} strokeWidth="2.500"><path d="M-2-4.500A6.500 6.500 0 1 0-2 4.500M2-4.500A6.500 6.500 0 1 1 2 4.500" /><path d="M-6 0H6" strokeWidth="3" /></g>
    },
    {
        name: 'Layer style',
        icon: <g fill={MUTED}><text x="-12" y="8" fontSize="28" fontStyle="italic" fontFamily="'Open Sans', sans-serif">fx</text><path d="M11 13h8l-4 4z" fill="#606060" /></g>
    },
    {
        name: 'Layer mask', icon: <g><rect x="-12" y="-10" width="25" height="19" rx="1" fill={MUTED} /><circle r="6" fill="#323232" /></g>
    },
    {
        name: 'New adjustment layer', icon: <g><AdjustShape color={MUTED} r={10.5} /><path d="M11 13h8l-4 4z" fill="#606060" /></g>
    },
    {
        name: 'New group', icon: <path d="M-12-11h11l1 2h-12zM-12-7h22q2 0 2 1V8q0 1-1 1h-22q-1 0-1-1z" fill={MUTED} />
    },
    {
        name: 'New layer', icon: <g fill="none" stroke={MUTED} strokeWidth="2.200"><path d="M-9-9.500H9v18H-2L-9 2z" /><path d="M-9 0h8v8" /></g>
    },
    {
        name: 'Delete layer', icon: <TrashShape color={MUTED} />
    },
]

const LayersPanel = () => {
    const [kind, setKind] = useState('Kind');
    const [blend, setBlend] = useState('Normal');

    return (
        <div className="flex min-h-0 flex-1 flex-col bg-[#323232] text-[20px]">
            <PanelTabs tabs={['Layers', 'Channels', 'Paths']} />
            <div className="flex h-16 shrink-0 items-center border-b-2 border-[#262626] pt-[10px] pl-[6px]">
                <div className="relative">
                    <select
                        aria-label="Filter kind"
                        value={kind}
                        onChange={(e) => setKind(e.target.value)}
                        className="block h-[38px] w-[177px] appearance-none rounded-[5px] border-2 border-[#3e3e3e] bg-[#2b2b2b] pl-[42px] text-[#7c7c7c]"
                    >
                        <option>Kind</option>
                    </select>
                    <svg className="pointer-events-none absolute top-[9px] left-[18px]" width="22" height="22" viewBox="0 0 22 22" fill="none" stroke="#8a8a8a"><circle cx="8.500" cy="8.500" r="7" strokeWidth="2.200" /><path d="M13 13l7 7" strokeWidth="3.500" /></svg>
                    <ChevronDown className="pointer-events-none absolute top-4 right-[7px]" color="#6c6c6c" />
                </div>
                <div className="ml-3 flex">
                    {filterIcons.map((item) => (
                        <button key={item.name} type="button" aria-label={item.name} className="flex w-12 justify-center">
                            <svg width="30" height="30" viewBox="-15 -15 30 30">{item.icon}</svg>
                        </button>
                    ))}
                </div>
                <button type="button" aria-label="Toggle filter" className="ml-[11px] h-[38px] w-5 rounded-full border-2 border-[#3e3e3e] bg-[#2b2b2b]">
                    <div className="mb-[17px] h-4 w-4 rounded-full bg-[#808080]"></div>
                </button>
            </div>
            <div className="flex h-14 shrink-0 items-center border-b-2 border-[#262626] pt-[2px] pl-[6px]">
                <div className="relative">
                    <select
                        aria-label="Blend mode"
                        value={blend}
                        onChange={(e) => setBlend(e.target.value)}
                        className="block h-[38px] w-[265px] appearance-none rounded-[5px] border-2 border-[#484848] bg-[#282828] pl-[14px] text-[#e6e6e6]"
                    >
                        <option>Normal</option>
                    </select>
                    <ChevronDown className="pointer-events-none absolute top-4 right-[7px]" />
                </div>
                <Percent id="opacity" label="Opacity:" className="w-[91px]" />
            </div>
            <div className="flex h-[60px] shrink-0 items-center border-b border-[#262626] pb-[3px] pl-[10px]">
                <span className="w-[54px] text-[#7c7c7c]">Lock:</span>
                {lockIcons.map((item) => (
                    <button key={item.name} type="button" aria-label={item.name} className="flex w-11 justify-center">
                        <svg width="32" height="32" viewBox="-16 -16 32 32">{item.icon}</svg>
                    </button>
                ))}
                <Percent id="fill" label="Fill:" className="w-[78px]" />
            </div>
            <div className="flex min-h-0 flex-1 bg-[#2a2a2a]">
                <ul className="flex-1">
                    {layers.map((layer) => (
                        <li key={layer.name} className="flex h-[83px] border-b-2 border-[#2a2a2a] bg-[#323232] text-[#e6e6e6]">
                            <button type="button" aria-label={'Toggle ' + layer.name} className="flex w-[62px] items-center justify-center border-r-2 border-[#2a2a2a] pl-[2px]"><Eye /></button>
                            <div className={'flex flex-1 items-center ' + (layer.active ? 'bg-[#4a4a4a]' : '')}>
                                {layer.thumb}
                                <span className="ml-[10px]">{layer.name}</span>
                            </div>
                        </li>
                    ))}
                </ul>
                <div className="w-[30px] bg-[#282828]"></div>
            </div>
            <div className="flex h-[50px] shrink-0 items-center justify-end border-t-2 border-[#262626] pr-10">
                {footerIcons.map((item) => (
                    <button key={item.name} type="button" aria-label={item.name} className="flex w-[54px] justify-center">
                        <svg className="overflow-visible" width="40" height="46" viewBox="-20 -23 40 46">{item.icon}</svg>
                    </button>
                ))}
            </div>
        </div>
    );
}

const App = () => {
    return (
        <div className="flex h-screen bg-white pt-[53px] pr-[105px] pb-[148px] pl-[106px] font-['Inter',sans-serif]">
            <div className="flex min-w-0 flex-1 flex-col overflow-hidden rounded-t-[10px] border-2 border-[#1f1f1f] bg-[#323232] shadow-[0_0_2px_rgba(0,0,0,0.5),0_50px_90px_rgba(0,0,0,0.5)]">
                <div className="grid h-11 shrink-0 grid-cols-[1fr_auto_1fr] items-center border-b-2 border-[#212121]">
                    <div className="flex gap-4 pb-[2px] pl-4">
                        <button type="button" aria-label="Close window" className="flex h-6 w-6 items-center justify-center rounded-full border border-[#e0443e] bg-[#fc615d]"><span className="h-2 w-2 rounded-full bg-[#4d0000]"></span></button>
                        <button type="button" aria-label="Minimize window" className="h-6 w-6 rounded-full border border-[#dea123] bg-[#fdbc40]"></button>
                        <button type="button" aria-label="Zoom window" className="h-6 w-6 rounded-full border border-[#1aab29] bg-[#3ac94b]"></button>
                    </div>
                    <h1 className="pt-1 text-[26px] leading-none text-[#cacaca]">Adobe Photoshop CC 2019</h1>
                </div>
                <OptionsBar />
                <div className="flex min-h-0 flex-1">
                    <Toolbar />
                    <Gutter />
                    <DocumentArea />
                    <Gutter />
                    <div className="flex w-[926px] shrink-0 flex-col">
                        <div className="flex h-6 shrink-0 justify-between border-b-2 border-[#212121] bg-[#262626] pt-[5px] pr-3 pl-12">
                            <DoubleChevron left />
                            <DoubleChevron />
                        </div>
                        <div className="flex min-h-0 flex-1">
                            <Dock />
                            <Gutter />
                            <div className="flex min-w-0 flex-1 flex-col">
                                <HistoryPanel />
                                <PanelGap />
                                <ColorPanel />
                                <PanelGap />
                                <LayersPanel />
                            </div>
                        </div>
                    </div>
                </div>
            </div>
        </div>
    );
}

export default App;
